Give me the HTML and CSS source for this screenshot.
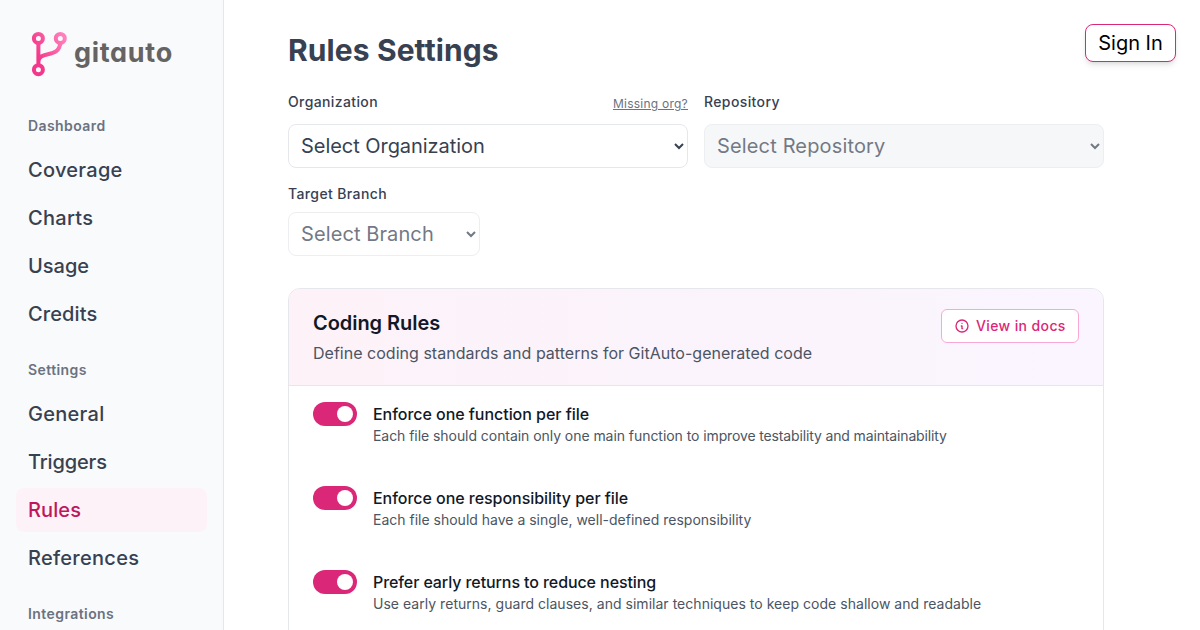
FILE: index.html
```html
<!DOCTYPE html>
<html lang="en">
<head>
<meta charset="utf-8">
<title>Rules Settings - GitAuto</title>
<link rel="stylesheet" href="styles.css">
</head>
<body>
<div class="app">
  <aside class="sidebar">
    <a class="logo">
      <svg class="logo-mark" width="36" height="46" viewBox="0 0 36 46" fill="none">
        <defs>
          <linearGradient id="brand" gradientUnits="userSpaceOnUse" x1="6" y1="26" x2="36" y2="12">
            <stop offset="0" stop-color="#f4378a"/>
            <stop offset="1" stop-color="#ff80bd"/>
          </linearGradient>
        </defs>
        <g stroke="url(#brand)" stroke-width="4">
          <path d="M7.400 11v23M29.300 11C29.300 28 7.400 19 7.400 31"/>
          <circle cx="7.400" cy="7.400" r="4.500"/>
          <circle cx="29.300" cy="7.400" r="4.500"/>
          <circle cx="7.400" cy="38.700" r="4.500"/>
        </g>
      </svg>
      <span class="logo-text">gitauto</span>
    </a>
    <nav class="nav">
      <section class="nav-group">
        <h2 class="nav-heading">Dashboard</h2>
        <a class="nav-item wide">Coverage</a>
        <a class="nav-item wide">Charts</a>
        <a class="nav-item">Usage</a>
        <a class="nav-item loose">Credits</a>
      </section>
      <section class="nav-group">
        <h2 class="nav-heading">Settings</h2>
        <a class="nav-item wide">General</a>
        <a class="nav-item tight">Triggers</a>
        <a class="nav-item active loose">Rules</a>
        <a class="nav-item wide">References</a>
      </section>
      <section class="nav-group">
        <h2 class="nav-heading">Integrations</h2>
      </section>
    </nav>
  </aside>
  <main class="main">
    <h1 class="title">Rules Settings</h1>
    <div class="filters">
      <div class="field">
        <div class="field-head"><label class="label">Organization</label><a class="missing">Missing org?</a></div>
        <select class="select"><option>Select Organization</option></select>
      </div>
      <div class="field">
        <div class="field-head"><label class="label">Repository</label></div>
        <select class="select muted" disabled><option>Select Repository</option></select>
      </div>
    </div>
    <div class="branch">
      <label class="label">Target Branch</label>
      <select class="select pale" disabled><option>Select Branch</option></select>
    </div>
    <section class="card">
      <header class="card-head">
        <div>
          <h2 class="card-title">Coding Rules</h2>
          <p class="card-sub">Define coding standards and patterns for GitAuto-generated code</p>
        </div>
        <a class="docs">
          <svg width="16" height="16" viewBox="0 0 24 24" fill="none" stroke="currentColor" stroke-width="2" stroke-linecap="round" stroke-linejoin="round"><path d="M13 16h-1v-4h-1m1-4h.01M21 12a9 9 0 11-18 0 9 9 0 0118 0z"/></svg>
          View in docs
        </a>
      </header>
      <div class="rules">
        <div class="rule"><span class="toggle"><span class="knob"></span></span><div><h3 class="rule-title">Enforce one function per file</h3><p class="rule-sub snug">Each file should contain only one main function to <span class="dense">improve testability and maintainability</span></p></div></div>
        <div class="rule"><span class="toggle"><span class="knob"></span></span><div><h3 class="rule-title">Enforce one responsibility per file</h3><p class="rule-sub">Each file should have a single, well-defined responsibility</p></div></div>
        <div class="rule"><span class="toggle"><span class="knob"></span></span><div><h3 class="rule-title compact">Prefer early returns to reduce nesting</h3><p class="rule-sub airy">Use early returns, guard clauses, and similar techniques to keep code shallow and readable</p></div></div>
      </div>
    </section>
  </main>
  <button class="sign-in">Sign In</button>
</div>
</body>
</html>
```
FILE: styles.css
```css
* { box-sizing: border-box; margin: 0; padding: 0; }
body { font-family: Inter, "Liberation Sans", sans-serif; color: #374151; background: #fff; overflow: hidden; }
.app { display: flex; height: 630px; position: relative; overflow: hidden; }
.sidebar { width: 224px; flex: none; background: #f9fafb; border-right: 1px solid #e5e7eb; padding: 31px 16px 0; overflow: hidden; }
.logo { display: flex; height: 46px; padding-left: 15px; }
.logo-mark { flex: none; }
.logo-text { margin-left: 7px; font-size: 27px; line-height: 44px; font-weight: 700; color: #666361; font-feature-settings: "cv11"; letter-spacing: 0.7px; }
.nav { display: flex; flex-direction: column; gap: 24px; padding-top: 39px; }
.nav-group { display: flex; flex-direction: column; gap: 4px; }
.nav-heading { font-size: 14px; line-height: 20px; font-weight: 600; color: #6b7280; padding: 0 12px; margin-bottom: 8px; letter-spacing: 0.42px; }
.nav-item { font-size: 20px; line-height: 28px; font-weight: 500; padding: 8px 12px; border-radius: 8px; }
.wide { letter-spacing: 0.28px; }
.loose { letter-spacing: 0.1px; }
.tight { letter-spacing: -0.15px; }
.active { background: #fdf2f8; color: #be185d; }
.main { width: 880px; padding: 32px 0 0 64px; }
.title { font-size: 30px; line-height: 36px; font-weight: 700; letter-spacing: 0.1px; }
.filters { display: grid; grid-template-columns: 1fr 1fr; gap: 16px; margin-top: 24px; }
.field-head { display: flex; justify-content: space-between; height: 32px; }
.label { display: block; font-size: 14px; line-height: 20px; font-weight: 500; letter-spacing: 0.38px; }
.missing { font-size: 12px; line-height: 16px; margin-top: 4px; color: #6b7280; text-decoration: underline; letter-spacing: 0.24px; }
.select { display: block; width: 100%; height: 44px; padding: 8px; border: 1px solid #e5e7eb; border-radius: 8px; background: #fff; color: #374151; font-family: inherit; font-size: 20px; letter-spacing: -0.05px; }
.muted { background: #f3f4f6; color: #374151; opacity: .7; letter-spacing: 0.15px; }
.pale { color: #374151; opacity: .7; letter-spacing: 0.1px; }
.branch { width: 192px; margin-top: 16px; }
.branch .label { margin-bottom: 8px; }
.card { margin-top: 32px; height: 500px; border: 1px solid #e5e7eb; border-radius: 12px; overflow: hidden; }
.card-head { height: 97px; display: flex; justify-content: space-between; align-items: flex-start; padding: 20px 24px; background: linear-gradient(to right, #fdf2f8, #faf5ff); border-bottom: 1px solid #e5e7eb; }
.card-title { font-size: 20px; line-height: 28px; font-weight: 600; color: #111827; letter-spacing: -0.05px; }
.card-sub { font-size: 16px; line-height: 24px; color: #4b5563; margin-top: 4px; letter-spacing: 0.02px; }
.docs { display: flex; align-items: center; gap: 6px; width: 138px; height: 34px; padding: 0 12px; border: 1px solid #f9a8d4; border-radius: 6px; background: #fff; color: #db2777; font-size: 14px; line-height: 20px; font-weight: 500; letter-spacing: 0.38px; white-space: nowrap; }
.rules { padding: 16px 24px; display: flex; flex-direction: column; gap: 40px; }
.rule { display: flex; gap: 16px; height: 44px; }
.toggle { width: 44px; height: 24px; flex: none; border-radius: 12px; background: #db2777; display: flex; align-items: center; justify-content: flex-end; padding-right: 4px; }
.knob { width: 16px; height: 16px; border-radius: 50%; background: #fff; }
.rule-title { font-size: 16px; line-height: 24px; font-weight: 500; color: #111827; letter-spacing: -0.04px; }
.compact { letter-spacing: -0.09px; }
.rule-sub { font-size: 14px; line-height: 20px; color: #4b5563; }
.snug { letter-spacing: -0.055px; }
.dense { letter-spacing: -0.14px; }
.airy { letter-spacing: 0.03px; }
.sign-in { position: absolute; top: 24px; right: 24px; height: 38px; width: 91px; border: 1px solid #db2777; border-radius: 8px; background: #fff; color: #000; font-family: inherit; font-size: 20px; box-shadow: 0 4px 6px -1px rgba(0,0,0,.1), 0 2px 4px -2px rgba(0,0,0,.1); }
```
